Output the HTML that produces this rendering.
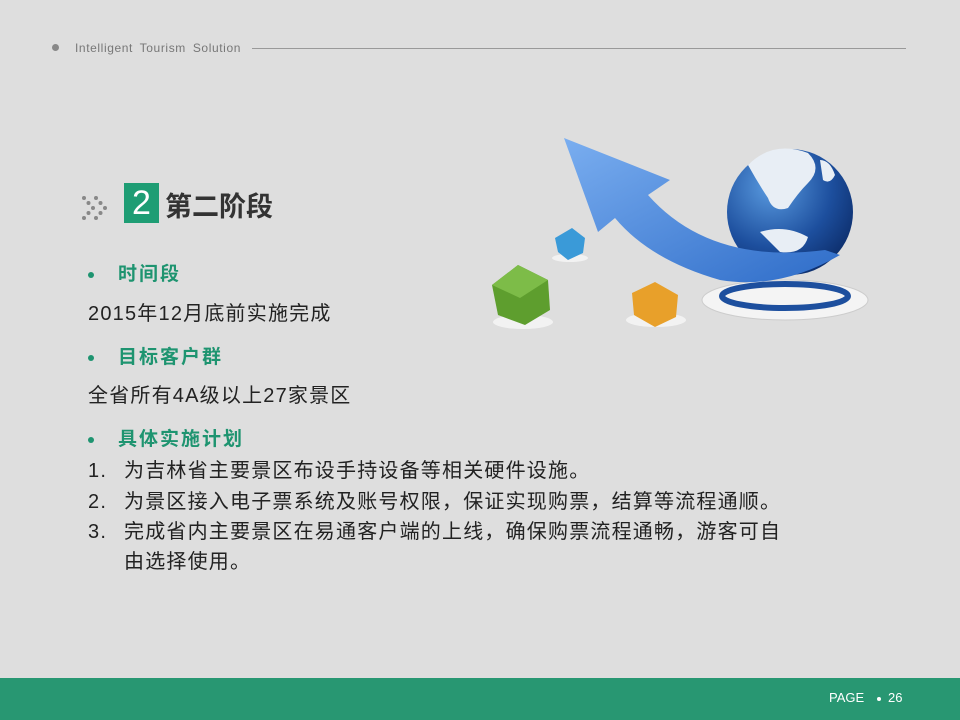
<!DOCTYPE html>
<html><head><meta charset="utf-8"><style>
body{margin:0;width:960px;height:720px;overflow:hidden;background:#dedede;font-family:"Liberation Sans","Noto Sans CJK SC",sans-serif;position:relative}
.a{position:absolute;white-space:nowrap}
.g{color:#1e9470;font-weight:bold;font-size:19px;letter-spacing:2px;line-height:26px}
.t{color:#222;font-size:20px;letter-spacing:1.2px;line-height:26px}
</style></head><body>
<div class="a" style="left:52px;top:44px;width:7px;height:7px;border-radius:50%;background:#888"></div>
<div class="a" style="left:75px;top:41px;font-size:12px;color:#777;letter-spacing:0.6px;word-spacing:3px">Intelligent Tourism Solution</div>
<div class="a" style="left:252px;top:48px;width:654px;height:1px;background:#999"></div>

<svg class="a" style="left:82px;top:196px" width="30" height="24">
<g fill="#888"><circle cx="2" cy="2" r="2"/><circle cx="6.5" cy="7" r="2"/><circle cx="11" cy="12" r="2"/><circle cx="6.5" cy="17" r="2"/><circle cx="2" cy="22" r="2"/>
<circle cx="14" cy="2" r="2"/><circle cx="18.5" cy="7" r="2"/><circle cx="23" cy="12" r="2"/><circle cx="18.5" cy="17" r="2"/><circle cx="14" cy="22" r="2"/></g></svg>
<div class="a" style="left:124px;top:183px;width:35px;height:40px;background:#1e9d74;color:#fff;font-size:34px;line-height:40px;text-align:center">2</div>
<div class="a" style="left:165px;top:185px;font-size:27px;font-weight:bold;color:#333">第二阶段</div>

<div class="a" style="left:88px;top:272px;width:6px;height:6px;border-radius:50%;background:#1e9470"></div>
<div class="a g" style="left:118px;top:262px">时间段</div>
<div class="a t" style="left:88px;top:301px">2015年12月底前实施完成</div>
<div class="a" style="left:88px;top:355px;width:6px;height:6px;border-radius:50%;background:#1e9470"></div>
<div class="a g" style="left:118px;top:345px">目标客户群</div>
<div class="a t" style="left:88px;top:383px">全省所有4A级以上27家景区</div>
<div class="a" style="left:88px;top:437px;width:6px;height:6px;border-radius:50%;background:#1e9470"></div>
<div class="a g" style="left:118px;top:427px">具体实施计划</div>
<div class="a t" style="left:88px;top:458px">1.</div><div class="a t" style="left:124px;top:458px">为吉林省主要景区布设手持设备等相关硬件设施。</div>
<div class="a t" style="left:88px;top:489px">2.</div><div class="a t" style="left:124px;top:489px">为景区接入电子票系统及账号权限，保证实现购票，结算等流程通顺。</div>
<div class="a t" style="left:88px;top:519px">3.</div><div class="a t" style="left:124px;top:519px">完成省内主要景区在易通客户端的上线，确保购票流程通畅，游客可自</div>
<div class="a t" style="left:124px;top:549px">由选择使用。</div>

<svg class="a" style="left:480px;top:120px" width="400" height="220">
<defs>
<radialGradient id="gl" cx="0.35" cy="0.3" r="0.8"><stop offset="0" stop-color="#5a9be0"/><stop offset="0.6" stop-color="#1d4f9e"/><stop offset="1" stop-color="#0b2a66"/></radialGradient>
<linearGradient id="ar" x1="0" y1="0" x2="1" y2="1"><stop offset="0" stop-color="#7aaef0"/><stop offset="1" stop-color="#2e6cc8"/></linearGradient>
</defs>
<ellipse cx="305" cy="180" rx="83" ry="20" fill="#f4f4f4" stroke="#ccc"/>
<ellipse cx="305" cy="176" rx="63" ry="12" fill="none" stroke="#1d4f9e" stroke-width="6"/>
<circle cx="310" cy="92" r="63" fill="url(#gl)"/>
<path d="M268 45 q25-25 60-12 q15 15 0 30 q-10 10-20 25 q-15 5-20-10 q-10-15-20-33z M280 112 q25-8 48 5 q-5 18-28 15z M340 40 q10 0 15 15 q-5 10-12 5z" fill="#e8eef5"/>
<path d="M84 18 L190 60 L168 75 Q230 145 345 130 L360 135 Q300 170 240 160 Q170 140 135 98 L118 112 Z" fill="url(#ar)"/>
<ellipse cx="43" cy="202" rx="30" ry="7" fill="#f2f2f2"/>
<path d="M12 165 L38 145 L68 160 L70 190 L45 205 L18 195 Z" fill="#5e9e2e"/>
<path d="M12 165 L38 145 L68 160 L40 178 Z" fill="#7dbc48"/>
<ellipse cx="176" cy="200" rx="30" ry="7" fill="#f2f2f2"/>
<path d="M152 173 L175 162 L198 175 L196 197 L175 207 L154 195 Z" fill="#e8a02a"/>
<ellipse cx="90" cy="138" rx="18" ry="4" fill="#f2f2f2"/>
<path d="M75 118 L92 108 L105 118 L103 133 L88 140 L78 132 Z" fill="#3a9ad8"/>
</svg>

<div class="a" style="left:0;top:678px;width:960px;height:42px;background:#289772"></div>
<div class="a" style="left:829px;top:690px;font-size:13px;color:#fff">PAGE</div>
<div class="a" style="left:877px;top:697px;width:4px;height:4px;border-radius:50%;background:#fff"></div>
<div class="a" style="left:888px;top:690px;font-size:13px;color:#fff">26</div>
</body></html>
